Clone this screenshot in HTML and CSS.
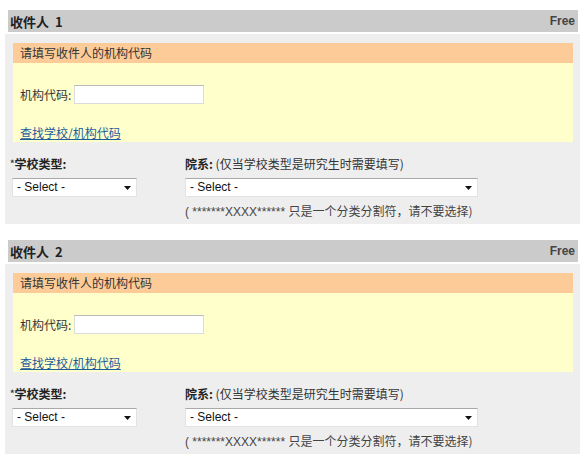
FILE: index.html
```html
<!DOCTYPE html>
<html lang="zh-CN">
<head>
<meta charset="utf-8">
<title>收件人</title>
<link rel="stylesheet" href="styles.css">
</head>
<body>
<div class="recipient">
  <div class="rhead"><span class="rtitle">收件人 &nbsp;1</span><span class="free">Free</span></div>
  <div class="panel">
    <div class="codebox">
      <div class="codehead">请填写收件人的机构代码</div>
      <div class="coderow"><span class="codelabel">机构代码:</span><input class="codeinput" type="text"></div>
      <div class="linkrow"><a href="#" class="findlink">查找学校/机构代码</a></div>
    </div>
    <div class="form">
      <div class="col col-left">
        <div class="flabel"><span class="star">*</span><b>学校类型:</b></div>
        <div class="sel sel-short"><span>- Select -</span><svg class="arrow" width="7" height="4" viewBox="0 0 7 4"><path d="M0 0h7L3.5 4z" fill="#111"/></svg></div>
      </div>
      <div class="col col-right">
        <div class="flabel"><b>院系:</b> (仅当学校类型是研究生时需要填写)</div>
        <div class="sel sel-long"><span>- Select -</span><svg class="arrow" width="7" height="4" viewBox="0 0 7 4"><path d="M0 0h7L3.5 4z" fill="#111"/></svg></div>
        <div class="note"><span class="latin">( *******XXXX****** </span>只是一个分类分割符，请不要选择)</div>
      </div>
    </div>
  </div>
</div>
<div class="recipient">
  <div class="rhead"><span class="rtitle">收件人 &nbsp;2</span><span class="free">Free</span></div>
  <div class="panel">
    <div class="codebox">
      <div class="codehead">请填写收件人的机构代码</div>
      <div class="coderow"><span class="codelabel">机构代码:</span><input class="codeinput" type="text"></div>
      <div class="linkrow"><a href="#" class="findlink">查找学校/机构代码</a></div>
    </div>
    <div class="form">
      <div class="col col-left">
        <div class="flabel"><span class="star">*</span><b>学校类型:</b></div>
        <div class="sel sel-short"><span>- Select -</span><svg class="arrow" width="7" height="4" viewBox="0 0 7 4"><path d="M0 0h7L3.5 4z" fill="#111"/></svg></div>
      </div>
      <div class="col col-right">
        <div class="flabel"><b>院系:</b> (仅当学校类型是研究生时需要填写)</div>
        <div class="sel sel-long"><span>- Select -</span><svg class="arrow" width="7" height="4" viewBox="0 0 7 4"><path d="M0 0h7L3.5 4z" fill="#111"/></svg></div>
        <div class="note"><span class="latin">( *******XXXX****** </span>只是一个分类分割符，请不要选择)</div>
      </div>
    </div>
  </div>
</div>
</body>
</html>
```
FILE: styles.css
```css
* { box-sizing: border-box; }
html, body { margin: 0; padding: 0; background: #ffffff; }
body {
  font-family: "Noto Sans CJK SC", "Liberation Sans", sans-serif;
  font-size: 12px;
  color: #333333;
  padding-top: 10px;
}
.recipient { margin-bottom: 16px; }
.rhead {
  margin: 0 2px 0 8px;
  height: 22px;
  background: #cbcbcb;
  display: flex;
  align-items: center;
  justify-content: space-between;
  padding: 0 3px 0 2px;
}
.rtitle { font-weight: bold; font-size: 13px; color: #222; }
.free { font-family: "Liberation Sans", sans-serif; font-weight: bold; font-size: 12px; color: #444; }
.panel {
  margin: 2px 0 0 5px;
  background: #eeeeef;
  padding: 9px 7px 6px 5px;
}
.codebox {
  margin-left: 3px;
  background: #ffffcc;
  padding-bottom: 2px;
}
.codehead {
  background: #fccb98;
  height: 20px;
  line-height: 20px;
  padding-left: 7px;
  color: #333;
}
.coderow {
  margin-top: 22px;
  display: flex;
  align-items: center;
  padding-left: 7px;
  height: 19px;
}
.codelabel { width: 54px; }
.codeinput {
  width: 130px;
  height: 19px;
  border: 1px solid #dcdcdc;
  border-top-color: #b9b9b9;
  background: #fff;
  margin: 0;
  padding: 0;
}
.linkrow {
  margin-top: 22px;
  padding-left: 7px;
  height: 14px;
  line-height: 14px;
}
.findlink { color: #1c5c9b; text-decoration: underline; }
.form {
  display: flex;
  margin-top: 14px;
}
.col-left { width: 175px; }
.col-right { flex: 1; }
.flabel { height: 16px; line-height: 16px; white-space: nowrap; }
.flabel b { color: #222; }
.star { font-size: 9px; vertical-align: top; font-weight: bold; }
.sel {
  position: relative;
  margin-top: 6px;
  height: 19px;
  background: #fff;
  border: 1px solid #e2e2e2;
  border-top-color: #a9a9a9;
  font-family: "Liberation Sans", sans-serif;
  font-size: 12px;
  line-height: 17px;
  padding-left: 4px;
  color: #111;
}
.sel-short { width: 125px; margin-left: 2px; }
.sel-long { width: 293px; }
.arrow { position: absolute; right: 5px; top: 7px; }
.note {
  margin-top: 7px;
  height: 14px;
  line-height: 14px;
  color: #444;
  white-space: nowrap;
}
.latin { font-family: "Liberation Sans", sans-serif; font-size: 12px; }
```
